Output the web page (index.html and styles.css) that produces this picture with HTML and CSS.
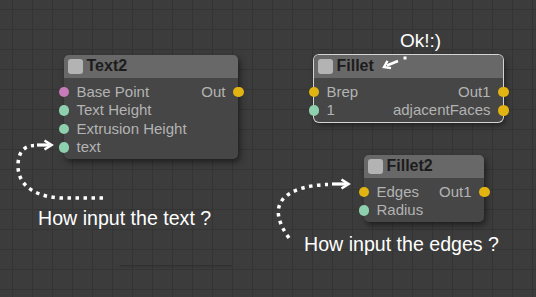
FILE: index.html
```html
<!DOCTYPE html>
<html lang="en">
<head>
  <meta charset="UTF-8" />
  <title>Node Editor</title>
  <link rel="stylesheet" href="styles.css">
</head>
<body>
  <div class="canvas">

    <!-- Text2 node -->
    <div class="node text2">
      <div class="node-head"><span class="check"></span>Text2</div>
      <div class="node-body">
        <div class="ins">
          <div class="port in pink">Base Point</div>
          <div class="port in mint">Text Height</div>
          <div class="port in mint">Extrusion Height</div>
          <div class="port in mint">text</div>
        </div>
        <div class="outs">
          <div class="port out gold">Out</div>
        </div>
      </div>
    </div>

    <!-- Fillet node (selected) -->
    <div class="node fillet selected">
      <div class="node-head"><span class="check"></span>Fillet</div>
      <div class="node-body">
        <div class="ins">
          <div class="port in gold">Brep</div>
          <div class="port in mint">1</div>
        </div>
        <div class="outs">
          <div class="port out gold">Out1</div>
          <div class="port out gold">adjacentFaces</div>
        </div>
      </div>
    </div>

    <!-- Fillet2 node -->
    <div class="node fillet2">
      <div class="node-head"><span class="check"></span>Fillet2</div>
      <div class="node-body">
        <div class="ins">
          <div class="port in gold">Edges</div>
          <div class="port in mint">Radius</div>
        </div>
        <div class="outs">
          <div class="port out gold">Out1</div>
        </div>
      </div>
    </div>

    <div class="shade-line"></div>

    <!-- annotations -->
    <div class="note ok">Ok!:)</div>
    <div class="note q-text">How input the text ?</div>
    <div class="note q-edges">How input the edges ?</div>

    <svg class="marks" width="536" height="297" viewBox="0 0 536 297">
      <g fill="none" stroke="#fff">
        <path class="dots" d="M103 198 L60 198 C30 196, 18 182, 18 166 C18 152, 24 146, 34 145.5" />
        <path d="M37 145 L49 145" stroke-width="3.2" />
        <path d="M44.5 140.5 L51.5 145 L44.5 149.5" stroke-width="2.6" />

        <path class="dots" d="M289 238 C279 224, 274 210, 283 199 C292 189, 310 185, 328 184.5" />
        <path d="M332 184 L346 184" stroke-width="3.2" />
        <path d="M341.5 179.5 L348.5 184 L341.5 188.5" stroke-width="2.6" />

        <path d="M398 61 L387 65.5" stroke-width="2.6" />
        <path d="M387.5 60.8 L384 67 L391 68.1" stroke-width="2.4" />
      </g>
      <rect x="403.5" y="56.5" width="3" height="3" fill="#fff" />
    </svg>
  </div>
</body>
</html>
```

FILE: styles.css
```css
html, body {
  margin: 0;
  padding: 0;
}
body {
  font-family: "Liberation Sans", Arial, sans-serif;
  background: #3b3b3b;
}
.canvas {
  position: relative;
  width: 536px;
  height: 297px;
  overflow: hidden;
  background-color: #3c3c3c;
  background-image:
    linear-gradient(to right, #343434 1px, transparent 1px),
    linear-gradient(to bottom, #343434 1px, transparent 1px);
  background-size: 20px 20px;
  background-position: 12px 9px;
}

/* nodes */
.node {
  position: absolute;
  background: #464646;
  border-radius: 5px;
  box-shadow: 2px 3px 6px rgba(0, 0, 0, 0.5);
}
.node.selected {
  box-shadow: 0 0 0 1px #d4d4d4, 2px 3px 6px rgba(0, 0, 0, 0.5);
}
.text2 { left: 64px; top: 55px; width: 174px; }
.fillet { left: 314px; top: 55px; width: 189px; }
.fillet2 { left: 364px; top: 155px; width: 120px; }

.node-head {
  display: flex;
  align-items: center;
  height: 22.5px;
  padding-left: 4px;
  background: #686868;
  border-radius: 5px 5px 0 0;
  color: #1c1c1c;
  font-weight: bold;
  font-size: 16px;
}
.check {
  width: 15px;
  height: 15px;
  margin-right: 3.5px;
  border-radius: 3px;
  background: #b3b3b3;
}
.node-body {
  display: flex;
  justify-content: space-between;
  padding: 5px 0 2px;
  color: #b3b3b3;
  font-size: 15px;
  line-height: 18.5px;
}
.port {
  position: relative;
  white-space: nowrap;
}
.port.in { padding-left: 12.5px; }
.port.out { padding-right: 12.5px; text-align: right; }
.port::before {
  content: "";
  position: absolute;
  top: 50%;
  width: 10.5px;
  height: 10.5px;
  margin-top: -5.25px;
  border-radius: 50%;
}
.port.in::before { left: -5.25px; }
.port.out::before { right: -5.75px; }
.pink::before { background: #c77cb9; }
.mint::before { background: #8ed0ae; }
.gold::before { background: #e1b412; }

.shade-line {
  position: absolute;
  left: 120px;
  top: 265px;
  width: 112px;
  height: 3px;
  background: linear-gradient(to bottom, rgba(0, 0, 0, 0.2), rgba(0, 0, 0, 0));
}

/* annotations */
.note {
  position: absolute;
  color: #ffffff;
  line-height: 1;
  white-space: nowrap;
}
.ok { left: 400px; top: 31px; font-size: 19px; }
.q-text { left: 38px; top: 208.5px; font-size: 19.6px; }
.q-edges { left: 304px; top: 235px; font-size: 19.6px; }

.marks {
  position: absolute;
  left: 0;
  top: 0;
}
.dots {
  stroke-width: 3.5;
  stroke-dasharray: 3.5 4.5;
}
```
